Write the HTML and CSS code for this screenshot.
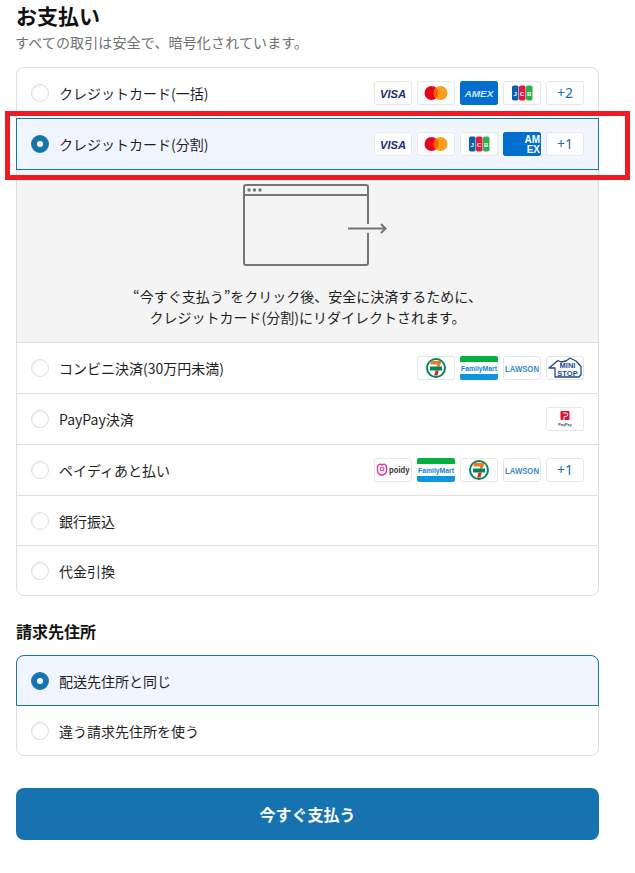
FILE: index.html
```html
<!DOCTYPE html>
<html lang="ja">
<head>
<meta charset="utf-8">
<title>お支払い</title>
<link rel="stylesheet" href="styles.css">
</head>
<body>
<main class="page">
  <h1 class="title">お支払い</h1>
  <p class="subtitle">すべての取引は安全で、暗号化されています。</p>

  <section class="card">
    <div class="row row-first">
      <span class="radio"></span><span class="label">クレジットカード(一括)</span>
      <div class="logos">
        <span class="logo"><svg viewBox="0 0 38 24"><text x="19" y="16.500" class="t-visa" textLength="26" lengthAdjust="spacingAndGlyphs">VISA</text></svg></span>
        <span class="logo"><svg viewBox="0 0 38 24"><circle cx="14.500" cy="12" r="7" fill="#eb001b"/><circle cx="23.500" cy="12" r="7" fill="#f79e1b"/><path d="M19 6.600a7 7 0 0 1 0 10.800a7 7 0 0 1 0-10.800z" fill="#ff5f00"/></svg></span>
        <span class="logo logo-amex"><svg viewBox="0 0 38 24"><text x="19" y="15.500" class="t-amex" textLength="29" lengthAdjust="spacingAndGlyphs">AMEX</text></svg></span>
        <span class="logo"><svg viewBox="0 0 38 24"><rect x="9" y="4.500" width="6.500" height="15" rx="1.800" fill="#0b5fb0"/><rect x="16" y="4.500" width="6.500" height="15" rx="1.800" fill="#e4173f"/><rect x="23" y="4.500" width="6.500" height="15" rx="1.800" fill="#2bb24c"/><text x="12.250" y="14.800" class="t-jcb">J</text><text x="19.250" y="14.800" class="t-jcb">C</text><text x="26.250" y="14.800" class="t-jcb">B</text></svg></span>
        <span class="logo logo-more">+2</span>
      </div>
    </div>

    <div class="row row-selected">
      <span class="radio radio-on"></span><span class="label">クレジットカード(分割)</span>
      <div class="logos">
        <span class="logo"><svg viewBox="0 0 38 24"><text x="19" y="16.500" class="t-visa" textLength="26" lengthAdjust="spacingAndGlyphs">VISA</text></svg></span>
        <span class="logo"><svg viewBox="0 0 38 24"><circle cx="14.500" cy="12" r="7" fill="#eb001b"/><circle cx="23.500" cy="12" r="7" fill="#f79e1b"/><path d="M19 6.600a7 7 0 0 1 0 10.800a7 7 0 0 1 0-10.800z" fill="#ff5f00"/></svg></span>
        <span class="logo"><svg viewBox="0 0 38 24"><rect x="9" y="4.500" width="6.500" height="15" rx="1.800" fill="#0b5fb0"/><rect x="16" y="4.500" width="6.500" height="15" rx="1.800" fill="#e4173f"/><rect x="23" y="4.500" width="6.500" height="15" rx="1.800" fill="#2bb24c"/><text x="12.250" y="14.800" class="t-jcb">J</text><text x="19.250" y="14.800" class="t-jcb">C</text><text x="26.250" y="14.800" class="t-jcb">B</text></svg></span>
        <span class="logo logo-amex"><svg viewBox="0 0 38 24"><text x="37" y="10.500" class="t-amex-big">AM</text><text x="37" y="21" class="t-amex-big">EX</text></svg></span>
        <span class="logo logo-more">+1</span>
      </div>
      <span class="highlight"></span>
    </div>

    <div class="redirect">
      <svg class="redirect-icon" viewBox="0 0 146 84" aria-hidden="true">
        <rect x="1" y="1" width="124" height="80" rx="2" fill="none" stroke="#757575" stroke-width="2"/>
        <line x1="1" y1="11" x2="125" y2="11" stroke="#757575" stroke-width="2"/>
        <circle cx="6" cy="6" r="1.700" fill="#757575"/><circle cx="11.500" cy="6" r="1.700" fill="#757575"/><circle cx="17" cy="6" r="1.700" fill="#757575"/>
        <rect x="104" y="40" width="24" height="9" fill="#f4f4f4"/>
        <line x1="105" y1="44.500" x2="142" y2="44.500" stroke="#757575" stroke-width="2"/>
        <path d="M138 40l4.500 4.500L138 49" fill="none" stroke="#757575" stroke-width="2"/>
      </svg>
      <p class="redirect-text">“今すぐ支払う”をクリック後、安全に決済するために、<br>クレジットカード(分割)にリダイレクトされます。</p>
    </div>

    <div class="row row-divided">
      <span class="radio"></span><span class="label">コンビニ決済(30万円未満)</span>
      <div class="logos">
        <span class="logo"><svg viewBox="0 0 38 24"><circle cx="19" cy="12" r="10" fill="#00855f"/><circle cx="19" cy="12" r="8" fill="#fff"/><path d="M13.500 5h11l-1.700 5.500h-3.200l.6-2H13.500z" fill="#ee7a1f"/><path d="M18.500 14.500h3.200l-1.200 5h-3.300z" fill="#e2231a"/><rect x="13" y="10.500" width="12" height="4" fill="#00855f"/></svg></span>
        <span class="logo logo-fm"><svg viewBox="0 0 38 24"><rect width="38" height="6" fill="#00b140"/><rect y="18" width="38" height="6" fill="#0d96e0"/><text x="19" y="15" class="t-fm" textLength="36" lengthAdjust="spacingAndGlyphs">FamilyMart</text></svg></span>
        <span class="logo"><svg viewBox="0 0 38 24"><text x="19" y="15.500" class="t-lawson" textLength="34" lengthAdjust="spacingAndGlyphs">LAWSON</text></svg></span>
        <span class="logo"><svg viewBox="0 0 38 24"><path d="M3 12L12 4.500l3 1.500 5-1 4-3 6 3 5 5.500v8l-2 2.500H9v-9z" fill="#fff" stroke="#1d4a94" stroke-width="1.300" stroke-linejoin="round"/><text x="21.500" y="11.500" class="t-mini">MINI</text><text x="21.500" y="19.500" class="t-mini">STOP</text></svg></span>
      </div>
    </div>

    <div class="row row-divided">
      <span class="radio"></span><span class="label">PayPay決済</span>
      <div class="logos">
        <span class="logo"><svg viewBox="0 0 38 24"><rect x="14.500" y="4" width="9" height="9" rx="1" fill="#ea0f2e"/><path d="M17 6h3a1.700 1.700 0 0 1 0 3.400h-2V13" fill="none" stroke="#fff" stroke-width="1"/><text x="19" y="18.500" class="t-paypay">PayPay</text></svg></span>
      </div>
    </div>

    <div class="row row-divided">
      <span class="radio"></span><span class="label">ペイディあと払い</span>
      <div class="logos">
        <span class="logo"><svg viewBox="0 0 38 24"><path d="M3.500 9c0-3 3-3.500 4.500-2 1.500-1.500 4.500-1 4.500 2v3.500c0 3-2.500 4.500-4.500 4.500s-4.500-1.500-4.500-4.500z" fill="none" stroke="#e62e9c" stroke-width="1.400"/><circle cx="8" cy="11" r="1.800" fill="none" stroke="#e62e9c" stroke-width="1.100"/><text x="15" y="15" class="t-poidy" textLength="20.500" lengthAdjust="spacingAndGlyphs">poidy</text></svg></span>
        <span class="logo logo-fm"><svg viewBox="0 0 38 24"><rect width="38" height="6" fill="#00b140"/><rect y="18" width="38" height="6" fill="#0d96e0"/><text x="19" y="15" class="t-fm" textLength="36" lengthAdjust="spacingAndGlyphs">FamilyMart</text></svg></span>
        <span class="logo"><svg viewBox="0 0 38 24"><circle cx="19" cy="12" r="10" fill="#00855f"/><circle cx="19" cy="12" r="8" fill="#fff"/><path d="M13.500 5h11l-1.700 5.500h-3.200l.6-2H13.500z" fill="#ee7a1f"/><path d="M18.500 14.500h3.200l-1.200 5h-3.300z" fill="#e2231a"/><rect x="13" y="10.500" width="12" height="4" fill="#00855f"/></svg></span>
        <span class="logo"><svg viewBox="0 0 38 24"><text x="19" y="15.500" class="t-lawson" textLength="34" lengthAdjust="spacingAndGlyphs">LAWSON</text></svg></span>
        <span class="logo logo-more">+1</span>
      </div>
    </div>

    <div class="row row-divided row-short">
      <span class="radio"></span><span class="label">銀行振込</span>
    </div>
    <div class="row row-divided row-short">
      <span class="radio"></span><span class="label">代金引換</span>
    </div>
  </section>

  <h2 class="section-title">請求先住所</h2>

  <section class="card">
    <div class="row row-selected row-selected-top">
      <span class="radio radio-on"></span><span class="label">配送先住所と同じ</span>
    </div>
    <div class="row row-last">
      <span class="radio"></span><span class="label">違う請求先住所を使う</span>
    </div>
  </section>

  <button class="pay" type="button">今すぐ支払う</button>
</main>
</body>
</html>
```
FILE: styles.css
```css
* { box-sizing: border-box; }

html, body {
  margin: 0;
  background: #fff;
}

body {
  font-family: "Noto Sans CJK JP", "Noto Sans", sans-serif;
  color: #1a1a1a;
  font-size: 14px;
}

.page {
  width: 615px;
  padding: 3px 0 33px 16px;
}

.title {
  margin: 0;
  font-size: 21px;
  line-height: 24px;
  font-weight: 700;
  color: #111;
}

.subtitle {
  margin: 5px 0 15px -1px;
  font-size: 14px;
  line-height: 20px;
  letter-spacing: 0.150px;
  color: #707070;
}

.card {
  width: 583px;
  border: 1px solid #dedede;
  border-radius: 8px;
}

.row {
  display: flex;
  align-items: center;
  height: 50px;
  padding: 0 14px;
}

.row-divided {
  height: 51px;
  border-top: 1px solid #dedede;
}

.row-short {
  height: 50px;
}

.row-last {
  height: 49px;
}

.row-selected {
  position: relative;
  height: 52px;
  margin: 0 -1px;
  background: #f0f5ff;
  border: 1px solid #1773b0;
}

.row-selected-top {
  height: 51px;
  margin-top: -1px;
  border-radius: 8px 8px 0 0;
}

.radio {
  flex: none;
  width: 18px;
  height: 18px;
  border: 1px solid #dedede;
  border-radius: 50%;
  background: #fff;
  box-shadow: inset 1px 1px 1px rgba(120, 150, 190, 0.12);
}

.radio-on {
  border: 6px solid #1773b0;
  box-shadow: none;
}

.label {
  margin-left: 10px;
  font-size: 14px;
  line-height: 20px;
  color: #1f1f1f;
}

.logos {
  display: flex;
  gap: 5px;
  margin-left: auto;
}

.logo {
  display: block;
  flex: none;
  width: 38px;
  height: 24px;
  background: #fff;
  outline: 1px solid #e6e7ea;
  outline-offset: -1px;
  border-radius: 3px;
  overflow: hidden;
}

.logo svg {
  display: block;
  width: 38px;
  height: 24px;
}

.logo-amex {
  background: #016fd0;
  outline-color: #016fd0;
}

.logo-more {
  font-family: "Noto Sans", sans-serif;
  font-size: 14px;
  line-height: 24px;
  text-align: center;
  color: #1f6fa8;
}

.logo-fm {
  outline: 0;
  border-radius: 2px;
}

.t-visa {
  font: italic 700 11.500px "Liberation Sans", sans-serif;
  fill: #1a2a80;
  text-anchor: middle;
}

.t-amex {
  font: italic 700 9.500px "Liberation Sans", sans-serif;
  fill: #cfe4f7;
  text-anchor: middle;
}

.t-amex-big {
  font: 700 10px "Liberation Sans", sans-serif;
  fill: #fff;
  text-anchor: end;
}

.t-jcb {
  font: 700 6px "Liberation Sans", sans-serif;
  fill: #fff;
  text-anchor: middle;
}

.t-fm {
  font: 700 7.500px "Liberation Sans", sans-serif;
  fill: #0a84d6;
  text-anchor: middle;
}

.t-lawson {
  font: 700 8.500px "Liberation Sans", sans-serif;
  fill: #3c8ac6;
  text-anchor: middle;
}

.t-mini {
  font: 700 7.500px "Liberation Sans", sans-serif;
  fill: #1d4a94;
  text-anchor: middle;
}

.t-paypay {
  font: 700 3.800px "Liberation Sans", sans-serif;
  fill: #444;
  text-anchor: middle;
}

.t-poidy {
  font: 700 9px "Liberation Sans", sans-serif;
  fill: #333;
}

.highlight {
  position: absolute;
  top: -8px;
  right: -32px;
  bottom: -11px;
  left: -12px;
  border: 5px solid #ed1c24;
  pointer-events: none;
}

.redirect {
  display: flex;
  flex-direction: column;
  align-items: center;
  height: 172px;
  background: #f4f4f4;
}

.redirect-icon {
  display: block;
  width: 146px;
  height: 84px;
  margin: 14px 0 0 17px;
}

.redirect-text {
  margin: 18px 0 0;
  font-size: 14px;
  line-height: 21px;
  text-align: center;
  color: #1f1f1f;
}

.section-title {
  margin: 24px 0 13px;
  font-size: 16px;
  line-height: 22px;
  font-weight: 700;
  color: #111;
}

.pay {
  display: block;
  width: 583px;
  height: 52px;
  margin-top: 32px;
  border: 0;
  border-radius: 8px;
  background: #1773b0;
  color: #fff;
  font: 700 16px "Noto Sans CJK JP", sans-serif;
}
```
